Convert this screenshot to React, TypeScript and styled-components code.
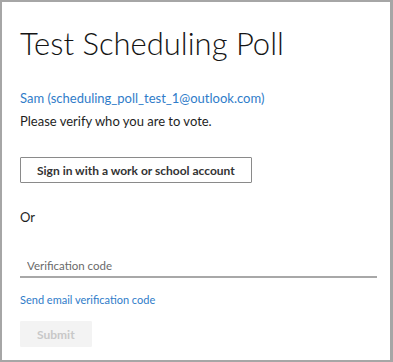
import React from "react";
import styled, { createGlobalStyle } from "styled-components";

const Global = createGlobalStyle`
  html, body { margin: 0; padding: 0; background: #ffffff; }
  body { font-family: Lato, "Open Sans", sans-serif; }
  * { box-sizing: border-box; }
`;

const Frame = styled.div`
  width: 393px;
  height: 362px;
  border: 2px solid #a6a6a6;
  border-right-width: 3px;
  background: #ffffff;
  padding: 20px 13px 0 18px;
  display: flex;
  flex-direction: column;
  align-items: flex-start;
`;

const Title = styled.h1`
  margin: 0;
  font-size: 31px;
  font-weight: 300;
  line-height: 42px;
  color: #141414;
`;

const LinkText = styled.a<{ $mt: number; $size: number }>`
  margin-top: ${(p) => p.$mt}px;
  font-size: ${(p) => p.$size}px;
  line-height: 18px;
  color: #2f7cc9;
  text-decoration: none;
  cursor: pointer;
`;

const Text = styled.p<{ $mt: number }>`
  margin: ${(p) => p.$mt}px 0 0;
  font-size: 13px;
  line-height: 18px;
  color: #1e1e1e;
`;

const Button = styled.button<{ $disabled?: boolean; $mt: number }>`
  margin-top: ${(p) => p.$mt}px;
  height: 26px;
  padding: 0 16px;
  font-family: inherit;
  font-size: 12px;
  font-weight: 700;
  border-radius: 1px;
  border: 1px solid ${(p) => (p.$disabled ? "#f3f3f3" : "#8a8a8a")};
  background: ${(p) => (p.$disabled ? "#f3f3f3" : "#ffffff")};
  color: ${(p) => (p.$disabled ? "#c8c8c8" : "#333333")};
  cursor: ${(p) => (p.$disabled ? "default" : "pointer")};
`;

const Field = styled.input`
  margin-top: 20px;
  width: 100%;
  height: 32px;
  border: none;
  border-bottom: 2px solid #a8a8a8;
  padding: 8px 0 0 7px;
  font-family: inherit;
  font-size: 11.5px;
  line-height: 18px;
  color: #333333;
  background: transparent;
  outline: none;
  &::placeholder { color: #6a6a6a; }
`;

export default function App() {
  return (
    <>
      <Global />
      <Frame>
        <Title>Test Scheduling Poll</Title>
        <LinkText $mt={25} $size={13}>Sam (scheduling_poll_test_1@outlook.com)</LinkText>
        <Text $mt={5}>Please verify who you are to vote.</Text>
        <Button $mt={27}>Sign in with a work or school account</Button>
        <Text $mt={25}>Or</Text>
        <Field placeholder="Verification code" />
        <LinkText $mt={13} $size={11}>Send email verification code</LinkText>
        <Button $mt={12} $disabled disabled>Submit</Button>
      </Frame>
    </>
  );
}
